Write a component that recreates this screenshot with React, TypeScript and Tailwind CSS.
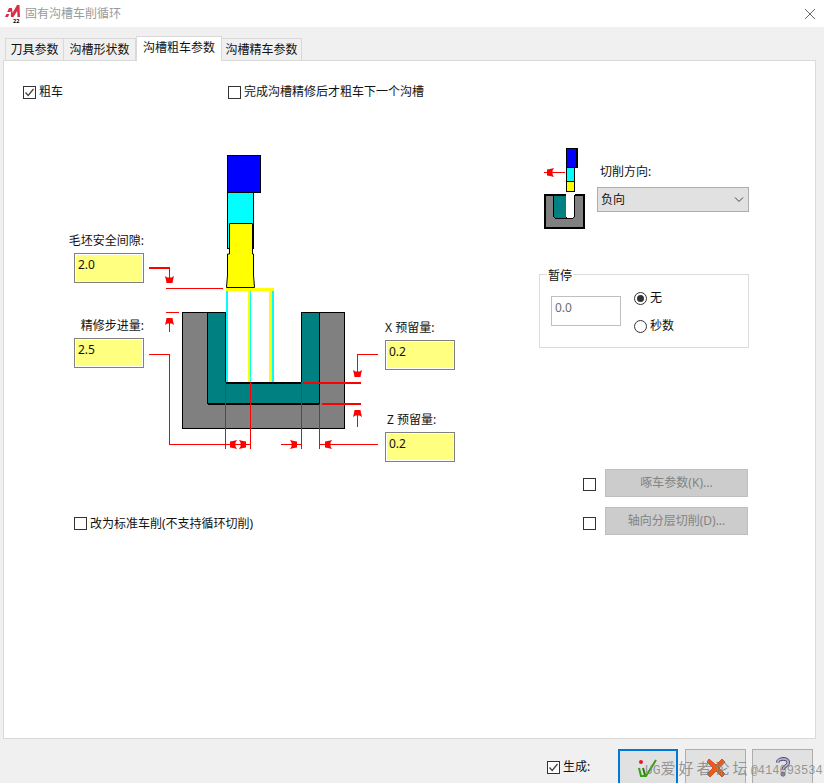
import { ReactNode } from 'react';

const Check = ({ checked = false, className = '' }: { checked?: boolean; className?: string }) => (
  <span className={`flex h-[13px] w-[13px] shrink-0 items-center justify-center border border-[#333333] bg-white ${className}`}>
    {checked && (
      <svg width="11" height="11" viewBox="0 0 11 11">
        <path d="M1.5 5.5 L4.2 8.5 L9.5 2" fill="none" stroke="#444444" strokeWidth="1.3" />
      </svg>
    )}
  </span>
);

const Radio = ({ checked = false, label }: { checked?: boolean; label: string }) => (
  <div className="flex h-[18px] items-center gap-[3px]">
    <span className="flex h-[13px] w-[13px] items-center justify-center rounded-full border border-[#333333] bg-white">
      {checked && <span className="h-[7px] w-[7px] rounded-full bg-[#333333]" />}
    </span>
    <span>{label}</span>
  </div>
);

const Tab = ({ label, active = false, className = '' }: { label: string; active?: boolean; className?: string }) => (
  <div
    className={`flex items-center justify-center border border-[#d9d9d9] ${
      active ? 'z-10 -mb-px h-[25px] border-b-0 bg-white pb-[2px]' : 'h-[22px] border-b-0 bg-[#f0f0f0]'
    } ${className}`}
  >
    {label}
  </div>
);

const YellowField = ({ value, className }: { value: string; className: string }) => (
  <input
    readOnly
    value={value}
    className={`absolute h-[30px] w-[70px] border border-[#808080] bg-[#ffff80] pb-[8px] pl-[3px] text-[12px] shadow-[inset_0_0_0_1px_#ffffff] outline-none ${className}`}
  />
);

const Label = ({ children, className }: { children: ReactNode; className: string }) => (
  <div className={`absolute h-[18px] leading-[18px] ${className}`}>{children}</div>
);

// tip of the arrow sits on (x, y), rot 0 points down
const Arrow = ({ x, y, rot }: { x: number; y: number; rot: number }) => (
  <polygon
    points="-4.5,-7 -2,-5.5 2,-5.5 4.5,-7 3.5,-3 3,0 -3,0 -3.5,-3"
    fill="#ff0000"
    transform={`translate(${x} ${y}) rotate(${rot})`}
  />
);

const RedLine = ({ d, w = 1 }: { d: string; w?: number }) => (
  <path d={d} fill="none" stroke="#ff0000" strokeWidth={w} shapeRendering="crispEdges" />
);

const GrooveDiagram = () => (
  <svg className="block" width="400" height="320" viewBox="60 145 400 320">
    <g shapeRendering="crispEdges">
      <rect x="182.5" y="312.5" width="162" height="116" fill="#808080" stroke="#000" />
      <rect x="226" y="312" width="75" height="70" fill="#fff" />
      <rect x="182" y="311" width="163" height="1" fill="#fff" />
      <path d="M182.5 312.5H207.5M319.5 312.5H344.5" stroke="#000" />
      <path
        d="M207.5 312.5H225.5V382.5H301.5V312.5H319.5V403.5H207.5Z"
        fill="#008080"
        stroke="#000"
      />
      <rect x="226" y="382" width="76" height="2" fill="#000" />
      <rect x="208" y="403" width="112" height="2" fill="#000" />
      <rect x="227.5" y="155.5" width="33" height="37" fill="#0000ff" stroke="#000" strokeWidth="1.5" />
      <rect x="227.5" y="192.5" width="25.5" height="56" fill="#00ffff" stroke="#000" />
      <rect x="226" y="288" width="48" height="3" fill="#ffff00" />
      <rect x="226" y="291" width="2" height="91" fill="#00ffff" />
      <rect x="248" y="291" width="2" height="91" fill="#ffff00" />
      <rect x="250" y="291" width="1" height="91" fill="#00ffff" />
      <rect x="269" y="291" width="3" height="91" fill="#ffff00" />
      <rect x="272" y="291" width="2" height="91" fill="#00ffff" />
    </g>
    <path
      d="M229.5 223.5H252.5V254H253.5V275L254.5 287.5H226.5L227.5 275V254H229.5Z"
      fill="#ffff00"
      stroke="#000"
    />
    <RedLine d="M149 268H170" w={2} />
    <RedLine d="M169.5 268V280" />
    <RedLine d="M166 288.5H223" />
    <RedLine d="M166 312.5H179" />
    <RedLine d="M169.5 318V332" />
    <RedLine d="M149 354.5H169.5V444.5H250.5" />
    <RedLine d="M225.5 382V449M250.5 382V449M301.5 382V449M319.5 404V449" />
    <RedLine d="M281 444.5H301M319 444.5H378" />
    <RedLine d="M378 354.5H357.5V372" />
    <RedLine d="M357.5 411V427" />
    <RedLine d="M303 383H361" w={2} />
    <RedLine d="M322 404H361" w={2} />
    <Arrow x={169.5} y={283} rot={0} />
    <Arrow x={169.5} y={318} rot={180} />
    <Arrow x={357.5} y={377} rot={0} />
    <Arrow x={357.5} y={410} rot={180} />
    <Arrow x={230} y={444.5} rot={90} />
    <Arrow x={246} y={444.5} rot={-90} />
    <Arrow x={297} y={444.5} rot={-90} />
    <Arrow x={325} y={444.5} rot={90} />
  </svg>
);

const DirectionDiagram = () => (
  <svg className="ml-px block shrink-0" width="50" height="88" viewBox="540 145 50 88">
    <g shapeRendering="crispEdges">
      <rect x="545" y="195" width="38.5" height="33" fill="#808080" stroke="#000" strokeWidth="2" />
      <path d="M553.5 195V216.5L555 218H566V195Z" fill="#008080" stroke="#000" />
      <path d="M566 193H574.5V216L572 218.5H568L566 216Z" fill="#fff" />
      <path d="M566.5 218.5H572.5L574.5 216.5V195" fill="none" stroke="#000" />
      <rect x="566.5" y="148.5" width="10.5" height="19" fill="#0000ff" stroke="#000" strokeWidth="1.5" />
      <rect x="566.5" y="167.5" width="7.5" height="13.5" fill="#00ffff" stroke="#000" />
      <rect x="566.5" y="181" width="7.5" height="10" fill="#ffff00" stroke="#000" />
      <rect x="569" y="191" width="3" height="1" fill="#000" />
    </g>
    <RedLine d="M544 172.5H565" />
    <Arrow x={547} y={172.5} rot={90} />
  </svg>
);

const SmallLogo = () => (
  <svg width="16" height="18" viewBox="0 0 16 18" className="shrink-0">
    <path d="M0 12 L4 3 H7 L7.5 8 L12 0 H14.5 L15 12 H12.5 L12.2 6 L8.5 12 H6 L5.5 6 L3 12Z" fill="#d6304a" />
    <rect x="1" y="7" width="5" height="2" fill="#ffffff" />
    <text x="8" y="17.5" fontSize="5.5" fontWeight="700" fill="#000">
      22
    </text>
  </svg>
);

const OkIcon = () => (
  <svg width="22" height="22" viewBox="0 0 22 22">
    <circle cx="4" cy="4" r="2" fill="#e02020" />
    <path d="M2 10 L4 18 H9 L19 2" fill="none" stroke="#38a018" strokeWidth="2" />
    <path d="M6 10 L8 17" fill="none" stroke="#2a7a10" strokeWidth="2" />
  </svg>
);

const CancelIcon = () => (
  <svg width="20" height="20" viewBox="0 0 20 20">
    <path
      d="M3 1 L10 7 L16 1 L19 4 L13 10 L19 16 L16 19 L10 13 L4 19 L1 16 L7 10 L1 4Z"
      fill="#ee5a1c"
      stroke="#c8400e"
      strokeWidth="0.8"
    />
  </svg>
);

const HelpIcon = () => (
  <svg width="16" height="20" viewBox="0 0 18 22">
    <path d="M3 6 C3 1 15 0 15 6 C15 10 9 10 9 14" fill="none" stroke="#4a4a6a" strokeWidth="4" />
    <path d="M3 6 C3 1 15 0 15 6 C15 10 9 10 9 14" fill="none" stroke="#b4b4d8" strokeWidth="2" />
    <circle cx="9" cy="19" r="2.4" fill="#8a8aac" stroke="#4a4a6a" strokeWidth="0.8" />
  </svg>
);

export default function App() {
  return (
    <div className="relative flex h-[783px] w-[824px] flex-col overflow-hidden bg-[#f0f0f0] font-['Noto_Sans','Noto_Sans_CJK_SC',sans-serif] text-[12px] text-[#111111]">
      <div className="flex h-[27px] shrink-0 items-center bg-white pl-[5px] pr-[8px]">
        <SmallLogo />
        <span className="ml-[4px] text-[#9a9a9a]">固有沟槽车削循环</span>
        <svg className="ml-auto" width="12" height="12" viewBox="0 0 12 12">
          <path d="M1 1L11 11M11 1L1 11" stroke="#666666" strokeWidth="1" />
        </svg>
      </div>

      <div className="flex h-[33px] shrink-0 items-end pl-[5px]">
        <Tab label="刀具参数" className="w-[59px]" />
        <Tab label="沟槽形状数" className="w-[72px] border-l-0" />
        <Tab label="沟槽粗车参数" active className="w-[86px]" />
        <Tab label="沟槽精车参数" className="w-[80px] border-l-0" />
      </div>

      <div className="ml-[3px] h-[679px] w-[813px] shrink-0 border border-[#d9d9d9] bg-white">
        <div className="mt-[22px] flex h-[18px] items-center pl-[19px]">
          <div className="flex w-[205px] items-center gap-[3px]">
            <Check checked />
            <span>粗车</span>
          </div>
          <div className="flex items-center gap-[3px]">
            <Check />
            <span>完成沟槽精修后才粗车下一个沟槽</span>
          </div>
        </div>

        <div className="mt-[44px] flex">
          <div className="ml-[56px] w-[400px]">
            <div className="relative h-[320px] w-[400px]">
              <GrooveDiagram />
              <Label className="right-[316px] top-[87px]">毛坯安全间隙:</Label>
              <YellowField value="2.0" className="left-[14px] top-[108px]" />
              <Label className="right-[316px] top-[172px]">精修步进量:</Label>
              <YellowField value="2.5" className="left-[14px] top-[193px]" />
              <Label className="left-[325px] top-[174px]">X 预留量:</Label>
              <YellowField value="0.2" className="left-[325px] top-[195px]" />
              <Label className="left-[327px] top-[266px]">Z 预留量:</Label>
              <YellowField value="0.2" className="left-[325px] top-[287px]" />
            </div>
            <div className="ml-[14px] mt-[52px] flex h-[13px] items-center gap-[3px]">
              <Check />
              <span>改为标准车削(不支持循环切削)</span>
            </div>
          </div>

          <div className="ml-[79px] w-[210px]">
            <div className="flex">
              <DirectionDiagram />
              <div className="ml-[7px] w-[152px]">
                <div className="ml-[3px] mt-[18px] h-[18px] leading-[18px]">切削方向:</div>
                <div className="mt-[6px] flex h-[25px] items-center justify-between border border-[#adadad] bg-[#e1e1e1] px-[3px] pt-px">
                  <span>负向</span>
                  <svg width="12" height="8" viewBox="0 0 12 8">
                    <path d="M2 1.5L6 5.5L10 1.5" fill="none" stroke="#444444" />
                  </svg>
                </div>
              </div>
            </div>

            <div className="relative mt-[41px] flex h-[74px] items-start border border-[#dcdcdc] pl-[11px]">
              <span className="absolute -top-[8px] left-[7px] bg-white px-px leading-[18px]">暂停</span>
              <input
                readOnly
                value="0.0"
                className="mt-[21px] h-[30px] w-[70px] border border-[#bfbfbf] bg-white pb-[7px] pl-[3px] text-[12px] text-[#6d6d6d] outline-none"
              />
              <div className="ml-[13px] mt-[14px] flex flex-col gap-[10px]">
                <Radio checked label="无" />
                <Radio label="秒数" />
              </div>
            </div>

            <div className="ml-[44px] mt-[121px] flex items-center">
              <Check className="mt-[3px]" />
              <div className="ml-[9px] flex h-[28px] w-[143px] items-center justify-center border border-[#bfbfbf] bg-[#cccccc] text-[#838383]">
                啄车参数(K)...
              </div>
            </div>
            <div className="ml-[44px] mt-[10px] flex items-center">
              <Check className="mt-[4px]" />
              <div className="ml-[9px] flex h-[28px] w-[143px] items-center justify-center border border-[#bfbfbf] bg-[#cccccc] text-[#838383]">
                轴向分层切削(D)...
              </div>
            </div>
          </div>
        </div>
      </div>

      <div className="flex items-start pl-[547px] pt-[10px]">
        <div className="mt-[9px] flex w-[71px] items-center gap-[3px]">
          <Check checked />
          <span>生成:</span>
        </div>
        <button className="flex h-[50px] w-[60px] items-start justify-center border-2 border-[#0078d7] bg-[#e1e1e1] pt-[7px]">
          <OkIcon />
        </button>
        <button className="ml-[7px] flex h-[50px] w-[61px] items-start justify-center border border-[#adadad] bg-[#e1e1e1] pt-[8px]">
          <CancelIcon />
        </button>
        <button className="ml-[6px] flex h-[50px] w-[61px] items-start justify-center border border-[#adadad] bg-[#e1e1e1] pt-[7px]">
          <HelpIcon />
        </button>
      </div>

      <div className="absolute left-[645px] top-[762px] whitespace-nowrap font-['Liberation_Mono','Noto_Sans_CJK_SC',monospace] text-[12px] leading-[18px] text-[#808080]/80">
        <span className="text-[13px]">UG</span>
        <span className="text-[15px] tracking-[3px]">爱好者论坛</span>
        <span>@414093534</span>
      </div>
    </div>
  );
}
